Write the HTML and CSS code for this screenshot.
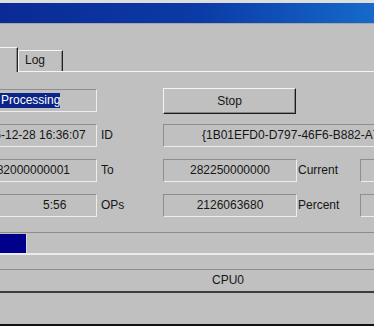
FILE: index.html
```html
<!DOCTYPE html>
<html lang="en">
<head>
    <meta charset="UTF-8">
    <title>Worker</title>
    <link rel="stylesheet" href="styles.css">
</head>
<body>
    <div class="window">
        <div class="titlebar"></div>

        <div class="tabs">
            <div class="tab active"></div>
            <div class="tab">Log</div>
        </div>

        <div class="panel">
            <div class="fields">
                <div class="field left"><span class="sel">Processing</span></div>
                <div></div>
                <button class="btn">Stop</button>
                <div></div>
                <div></div>

                <div class="field">2006-12-28 16:36:07</div>
                <div class="label">ID</div>
                <div class="field guid">{1B01EFD0-D797-46F6-B882-A7C3E5F1D024}</div>

                <div class="field">282000000001</div>
                <div class="label">To</div>
                <div class="field">282250000000</div>
                <div class="label right">Current</div>
                <div class="field"></div>

                <div class="field time">5:56</div>
                <div class="label">OPs</div>
                <div class="field">2126063680</div>
                <div class="label right">Percent</div>
                <div class="field"></div>
            </div>

            <div class="progress">
                <div class="fill" style="width: 63px;"></div>
            </div>

            <div class="cpu">CPU0</div>
        </div>

        <div class="footer"></div>
    </div>
</body>
</html>
```

FILE: styles.css
```css
body {
    margin: 0;
    width: 374px;
    height: 326px;
    overflow: hidden;
    background: #c0c0c0;
    font-family: "Liberation Sans", Arial, sans-serif;
    font-size: 12px;
    color: #161616;
}
.window {
    width: 530px;
    margin-left: -37px;
    background: #c0c0c0;
}
.titlebar {
    height: 20px;
    border-top: 3px solid #dedede;
    border-bottom: 1px solid #a6a6a6;
    background: linear-gradient(to right, #0a2794 0%, #0b3ba6 45%, #1566c6 75%, #2a7fd6 100%);
}
.tabs {
    display: flex;
    align-items: flex-end;
    height: 24px;
    margin-top: 23px;
    padding-left: 2px;
}
.tab {
    box-sizing: border-box;
    height: 21px;
    width: 45px;
    padding-left: 6px;
    line-height: 19px;
    background: #c0c0c0;
    border-top: 1px solid #f4f4f4;
    border-left: 1px solid #f4f4f4;
    border-right: 1px solid #222;
    box-shadow: inset -1px 0 #8a8a8a;
}
.tab.active {
    position: relative;
    z-index: 1;
    width: 53px;
    height: 25px;
    margin-bottom: -1px;
}
.panel {
    border-top: 1px solid #f4f4f4;
    padding-top: 16px;
}
.fields {
    display: grid;
    grid-template-columns: 134px 66px 134px 63px 1fr;
    grid-template-rows: 24px 23px 23px 23px;
    row-gap: 12px;
}
.field {
    box-sizing: border-box;
    height: 23px;
    line-height: 21px;
    border: 1px solid;
    border-color: #8e8e8e #ededed #ededed #8e8e8e;
    text-align: center;
    white-space: nowrap;
    overflow: hidden;
}
.fields > .field.left {
    text-align: left;
    margin-top: 1px;
}
.sel {
    display: inline-block;
    padding-left: 37px;
    line-height: 15px;
    vertical-align: middle;
    background: #0b2487;
    color: #fff;
}
.field.guid {
    grid-column: 3 / span 3;
    text-align: left;
    padding-left: 38px;
}
.field.time {
    text-align: left;
    padding-left: 79px;
}
.label {
    line-height: 23px;
    padding-left: 4px;
}
.label.right {
    padding-left: 1px;
}
.btn {
    box-sizing: border-box;
    width: 133px;
    height: 26px;
    padding: 0;
    font: inherit;
    color: inherit;
    background: #c0c0c0;
    border: 1px solid;
    border-color: #f4f4f4 #1a1a1a #1a1a1a #f4f4f4;
    box-shadow: inset -1px -1px #858585;
}
.progress {
    height: 20px;
    margin-top: 15px;
    border-top: 1px solid #8c8c8c;
    border-bottom: 2px solid #ececec;
}
.fill {
    height: 19px;
    margin-top: 1px;
    background: #00008a;
    box-shadow: 1px 0 #d8d8d8;
}
.cpu {
    height: 21px;
    line-height: 21px;
    margin-top: 14px;
    text-align: center;
    border-top: 1px solid #8c8c8c;
    border-bottom: 2px solid #3c3c3c;
}
.footer {
    height: 31px;
    border-bottom: 2px solid #111;
}
```
